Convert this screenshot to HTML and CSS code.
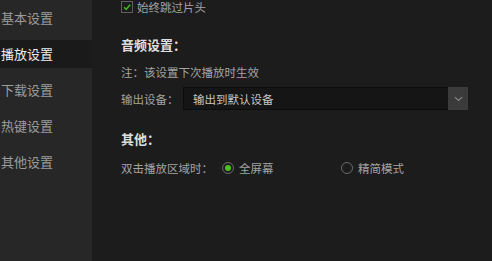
FILE: index.html
```html
<!DOCTYPE html>
<html lang="zh">
<head>
<meta charset="utf-8">
<link rel="stylesheet" href="styles.css">
</head>
<body>
<div class="app">
  <nav class="sidebar">
    <div class="nav-item">基本设置</div>
    <div class="nav-item active">播放设置</div>
    <div class="nav-item">下载设置</div>
    <div class="nav-item">热键设置</div>
    <div class="nav-item">其他设置</div>
  </nav>
  <main class="content">
    <div class="check-row">
      <span class="checkbox">
        <svg viewBox="0 0 12 12" width="12" height="12"><path d="M2.5 6.2 L5 8.8 L9.8 3.2" fill="none" stroke="#3fb81f" stroke-width="1.8"/></svg>
      </span>
      <span class="small">始终跳过片头</span>
    </div>
    <div class="heading h-audio">音频设置：</div>
    <div class="note small">注：该设置下次播放时生效</div>
    <div class="field-row">
      <span class="label small">输出设备：</span>
      <div class="select">
        <span class="select-text small">输出到默认设备</span>
        <span class="select-btn">
          <svg viewBox="0 0 10 6" width="9" height="6"><path d="M1 1 L5 4.6 L9 1" fill="none" stroke="#8a8a8a" stroke-width="1.2"/></svg>
        </span>
      </div>
    </div>
    <div class="heading h-other">其他：</div>
    <div class="radio-row">
      <span class="radio-label small">双击播放区域时：</span>
      <span class="radio-opt first"><span class="radio on"></span><span class="small">全屏幕</span></span>
      <span class="radio-opt"><span class="radio"></span><span class="small">精简模式</span></span>
    </div>
  </main>
</div>
</body>
</html>
```
FILE: styles.css
```css
html, body {
  margin: 0;
  padding: 0;
  width: 492px;
  height: 261px;
  overflow: hidden;
  background: #1c1c1c;
  font-family: "Noto Sans CJK SC", "Microsoft YaHei", sans-serif;
}
.app {
  display: flex;
  height: 261px;
}
.sidebar {
  width: 92px;
  background: #272727;
  flex-shrink: 0;
  display: flex;
  flex-direction: column;
  gap: 8px;
  padding-top: 4px;
  box-sizing: border-box;
}
.nav-item {
  height: 28px;
  line-height: 28px;
  font-size: 13px;
  color: #9b9b9b;
  padding-left: 1px;
  white-space: nowrap;
}
.nav-item.active {
  background: #1a1a1a;
  color: #ececec;
}
.content {
  flex: 1;
  padding-left: 29px;
}
.small {
  font-size: 11.5px;
  line-height: 14px;
  color: #a3a3a3;
}
.check-row {
  display: flex;
  align-items: center;
  height: 14px;
}
.checkbox {
  width: 12px;
  height: 12px;
  box-sizing: border-box;
  border: 1px solid #5e5e5e;
  display: flex;
  align-items: center;
  justify-content: center;
  margin-right: 4px;
}
.checkbox svg { display: block; }
.heading {
  font-size: 13px;
  font-weight: bold;
  line-height: 16px;
  color: #dedede;
}
.h-audio { margin-top: 23px; }
.note { margin-top: 12px; }
.field-row {
  display: flex;
  align-items: center;
  margin-top: 8px;
}
.label { width: 62px; }
.select {
  width: 285px;
  height: 23px;
  box-sizing: border-box;
  background: #151515;
  border: 1px solid #0c0c0c;
  display: flex;
  align-items: center;
  justify-content: space-between;
}
.select-text {
  padding-left: 9px;
  color: #c6c6c6;
}
.select-btn {
  width: 20px;
  height: 23px;
  margin: -1px -1px -1px 0;
  background: #3b3b3b;
  display: flex;
  align-items: center;
  justify-content: center;
}
.select-btn svg { display: block; }
.h-other { margin-top: 21px; }
.radio-row {
  display: flex;
  align-items: center;
  margin-top: 14px;
}
.radio-label { width: 101px; }
.radio-opt {
  display: flex;
  align-items: center;
}
.radio-opt.first { width: 119px; }
.radio {
  width: 12px;
  height: 12px;
  box-sizing: border-box;
  border: 1.5px solid #6a6a6a;
  border-radius: 50%;
  margin-right: 5px;
  display: flex;
  align-items: center;
  justify-content: center;
}
.radio.on::after {
  content: "";
  width: 6px;
  height: 6px;
  border-radius: 50%;
  background: #4cc21c;
}
```
